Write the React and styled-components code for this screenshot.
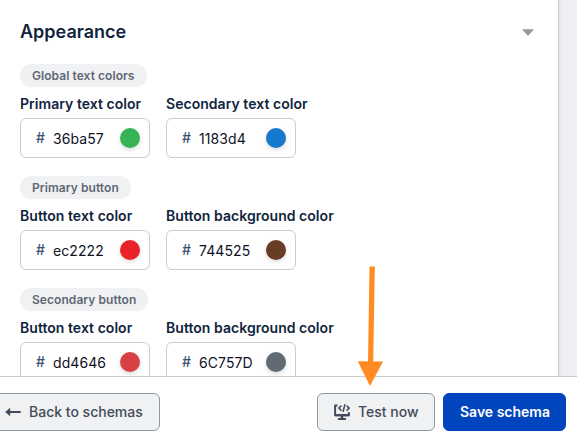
import React from "react";
import styled, { createGlobalStyle } from "styled-components";

const GlobalStyle = createGlobalStyle`
  *, *::before, *::after { box-sizing: border-box; }
  body { margin: 0; overflow: hidden; font-family: Inter, sans-serif; color: #10243e; }
`;

const Page = styled.div`
  position: relative;
  display: flex;
  flex-direction: column;
  width: 577px;
  height: 441px;
  overflow: hidden;
  background: #eff0f4;
`;

const Panel = styled.main`
  flex: 1;
  min-height: 0;
  width: 559px;
  padding: 20px 24px 0 20px;
  overflow: hidden;
  background: #fff;
  border-right: 1px solid #c6cbd2;
  box-shadow: 1px 0 3px rgba(30, 45, 70, 0.08);
`;

const Header = styled.header`
  display: flex;
  align-items: center;
  justify-content: space-between;
  height: 24px;
  margin-bottom: 20px;
`;

const Title = styled.h2`
  margin: 0;
  font-size: 18px;
  line-height: 24px;
  font-weight: 600;
`;

const Caret = styled.svg`
  display: block;
  width: 12px;
  height: 7px;
`;

const Group = styled.section`
  display: flex;
  flex-direction: column;
  align-items: flex-start;
  height: 112px;
`;

const Pill = styled.span`
  height: 23px;
  padding: 0 12px;
  border-radius: 12px;
  background: #f0f1f3;
  color: #616875;
  font-size: 12px;
  line-height: 23px;
  font-weight: 600;
  letter-spacing: 0.06px;
  white-space: nowrap;
`;

const Fields = styled.div`
  display: flex;
  gap: 16px;
  margin-top: 7px;
`;

const Field = styled.label`
  display: block;
  width: 130px;
  white-space: nowrap;
`;

const FieldName = styled.span`
  display: block;
  height: 24px;
  font-size: 14px;
  line-height: 20px;
  font-weight: 600;
  letter-spacing: 0.04px;
`;

const ColorInput = styled.span`
  display: flex;
  align-items: center;
  height: 40px;
  padding: 0 9px 0 15px;
  border: 1px solid #c9cbd5;
  border-radius: 6px;
  background: #fff;
  font-size: 14px;
`;

const Hash = styled.span`
  width: 17px;
  color: #3a5375;
  font-weight: 500;
  line-height: 20px;
`;

const Value = styled.span`
  flex: 1;
  padding-top: 2px;
  color: #10131f;
  line-height: 20px;
  letter-spacing: 0.08px;
`;

const Swatch = styled.span`
  width: 20px;
  height: 20px;
  border-radius: 50%;
  background: ${(p) => p.$color};
  box-shadow: 0 2px 4px rgba(0, 0, 0, 0.15);
`;

const Footer = styled.footer`
  display: flex;
  align-items: flex-start;
  gap: 8px;
  height: 65px;
  padding: 16px 11px 0 0;
  border-top: 1px solid #c9cbd5;
  background: #fff;
  position: relative;
`;

const Button = styled.button`
  display: flex;
  align-items: center;
  width: ${(p) => p.$width}px;
  height: 38px;
  padding: 0 0 0 16px;
  border: 1px solid ${(p) => (p.$primary ? "#0045be" : "#9096a2")};
  border-radius: 6px;
  background: ${(p) => (p.$primary ? "#0045be" : "#f0f1f3")};
  color: ${(p) => (p.$primary ? "#fff" : "#424b59")};
  font: ${(p) => (p.$primary ? 600 : 500)} 14px/20px Inter, sans-serif;
  white-space: nowrap;
`;

const BackButton = styled(Button)`
  margin-left: -12px;
  margin-right: auto;
`;

const ButtonIcon = styled.svg`
  flex: none;
  display: block;
  width: 16px;
  height: 16px;
  margin-right: 8px;
`;

const Pointer = styled.svg`
  position: absolute;
  left: 356px;
  top: 264px;
  width: 28px;
  height: 124px;
`;

const groups = [
  {
    name: "Global text colors",
    fields: [
      { name: "Primary text color", value: "36ba57", color: "#36b355" },
      { name: "Secondary text color", value: "1183d4", color: "#1579ce" },
    ],
  },
  {
    name: "Primary button",
    fields: [
      { name: "Button text color", value: "ec2222", color: "#ea2328" },
      { name: "Button background color", value: "744525", color: "#693d25" },
    ],
  },
  {
    name: "Secondary button",
    fields: [
      { name: "Button text color", value: "dd4646", color: "#d94043" },
      { name: "Button background color", value: "6C757D", color: "#626b73" },
    ],
  },
];

function ColorField({ field }) {
  return (
    <Field>
      <FieldName>{field.name}</FieldName>
      <ColorInput>
        <Hash>#</Hash>
        <Value>{field.value}</Value>
        <Swatch $color={field.color} />
      </ColorInput>
    </Field>
  );
}

export default function App() {
  return (
    <Page>
      <GlobalStyle />
      <Panel>
        <Header>
          <Title>Appearance</Title>
          <Caret viewBox="0 0 12 7">
            <path d="M0 0.3h12L6 7z" fill="#9298a6" />
          </Caret>
        </Header>
        {groups.map((group) => (
          <Group key={group.name}>
            <Pill>{group.name}</Pill>
            <Fields>
              {group.fields.map((field) => (
                <ColorField key={field.name} field={field} />
              ))}
            </Fields>
          </Group>
        ))}
      </Panel>
      <Footer>
        <BackButton $width={172}>
          <ButtonIcon viewBox="0 0 16 16">
            <path d="M15 8H3" fill="none" stroke="#424b59" strokeWidth="2" strokeLinecap="round" />
            <path d="M0.2 8L4.6 4.2Q5.2 3.9 5.2 4.7V11.3Q5.2 12.1 4.6 11.8z" fill="#424b59" />
          </ButtonIcon>
          Back to schemas
        </BackButton>
        <Button $width={118}>
          <ButtonIcon viewBox="0 0 16 16" fill="none" stroke="#424b59">
            <path d="M3.5 1.6H1.1V11.2H14.9V8.2" strokeWidth="2" strokeLinejoin="round" />
            <path d="M1 11.1H15M8 11V15" strokeWidth="2.4" />
            <path d="M4.8 14.9H11.2" strokeWidth="2" strokeLinecap="round" />
            <path d="M7 2L4.9 4.1L7 6.2M13 2L15.1 4.1L13 6.2M10.8 0.9L9.2 7.2" strokeWidth="1.6" strokeLinecap="round" strokeLinejoin="round" />
          </ButtonIcon>
          Test now
        </Button>
        <Button $primary $width={123}>Save schema</Button>
      </Footer>
      <Pointer viewBox="0 0 28 124">
        <path d="M13.5 2.5H18.8L17.2 98H12z" fill="#ff8b22" />
        <path d="M1.7 97.2L27 97.4L14 122z" fill="#ff8b22" />
      </Pointer>
    </Page>
  );
}
